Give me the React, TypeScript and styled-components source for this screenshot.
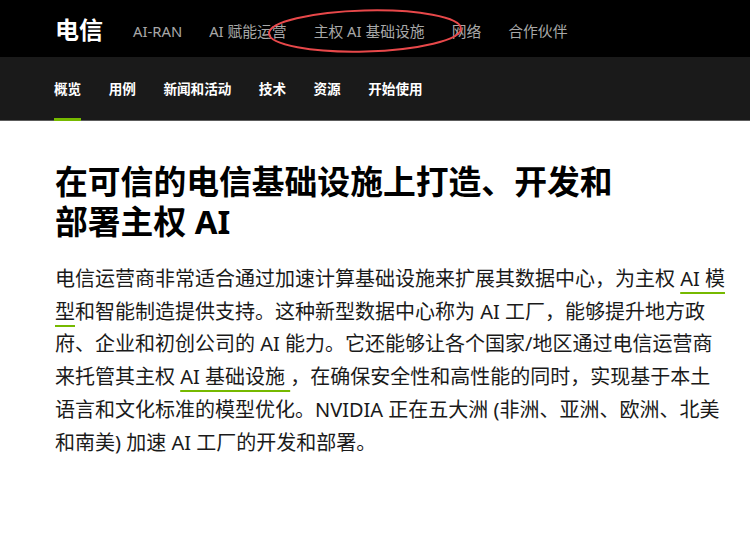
import React from "react";
import styled, { createGlobalStyle } from "styled-components";

const GlobalStyle = createGlobalStyle`
  html, body { margin: 0; padding: 0; background: #fff; }
  body { font-family: "Noto Sans", "Noto Sans CJK SC", sans-serif; }
  * { box-sizing: border-box; }
`;

const Page = styled.div`
  position: relative;
  width: 750px;
  min-height: 538px;
  background: #fff;
`;

const TopBar = styled.header`
  position: relative;
  height: 57px;
  background: #000;
  display: flex;
  align-items: center;
  padding-left: 55px;
`;

const Logo = styled.div`
  color: #fff;
  font-size: 24px;
  font-weight: 700;
  line-height: 1;
  margin-right: 30px;
  font-family: "Noto Sans CJK SC", sans-serif;
`;

const TopNav = styled.nav`
  display: flex;
  gap: 27px;
  padding-top: 5px;
`;

const TopLink = styled.span`
  color: #a8a8a8;
  font-size: 14.8px;
  line-height: 1;
  white-space: nowrap;
`;

const Annotation = styled.svg`
  position: absolute;
  left: 265px;
  top: 7px;
  width: 200px;
  height: 48px;
  pointer-events: none;
`;

const SubBar = styled.nav`
  height: 64px;
  background: #1a1a1a;
  border-bottom: 1px solid #5c5c5c;
  display: flex;
  align-items: stretch;
  padding-left: 54px;
  gap: 27.5px;
`;

const SubLink = styled.span<{ $active?: boolean }>`
  display: flex;
  align-items: center;
  color: #fff;
  font-size: 13.6px;
  font-weight: 700;
  white-space: nowrap;
  border-bottom: 3px solid ${(p) => (p.$active ? "#76b900" : "transparent")};
  margin-bottom: -1px;
  font-family: "Noto Sans CJK SC", sans-serif;
`;

const Main = styled.main`
  padding: 41px 28px 40px 55px;
`;

const Title = styled.h1`
  margin: 0 0 22px;
  font-size: 32.8px;
  line-height: 39.5px;
  font-weight: 700;
  color: #000;
  width: 590px;
  font-family: "Noto Sans", "Noto Sans CJK SC", sans-serif;
`;

const Body = styled.p`
  margin: 0;
  font-size: 20px;
  line-height: 32.7px;
  color: #1a1a1a;
  width: 670px;
`;

const Link = styled.a`
  color: #1a1a1a;
  text-decoration: underline;
  text-decoration-color: #76b900;
  text-decoration-thickness: 2px;
  text-underline-offset: 6px;
`;

export default function App() {
  const top = ["AI-RAN", "AI 赋能运营", "主权 AI 基础设施", "网络", "合作伙伴"];
  const sub = ["概览", "用例", "新闻和活动", "技术", "资源", "开始使用"];
  return (
    <Page>
      <GlobalStyle />
      <TopBar>
        <Logo>电信</Logo>
        <TopNav>
          {top.map((t) => (
            <TopLink key={t}>{t}</TopLink>
          ))}
        </TopNav>
        <Annotation viewBox="0 0 200 48">
          <ellipse
            cx="100"
            cy="24"
            rx="96"
            ry="20.5"
            fill="none"
            stroke="#e8484a"
            strokeWidth="2"
            transform="rotate(-1.5 100 24)"
          />
        </Annotation>
      </TopBar>
      <SubBar>
        {sub.map((s, i) => (
          <SubLink key={s} $active={i === 0}>
            {s}
          </SubLink>
        ))}
      </SubBar>
      <Main>
        <Title>在可信的电信基础设施上打造、开发和部署主权 AI</Title>
        <Body>
          电信运营商非常适合通过加速计算基础设施来扩展其数据中心，为主权 <Link>AI 模型</Link>和智能制造提供支持。这种新型数据中心称为 AI 工厂，能够提升地方政府、企业和初创公司的 AI 能力。它还能够让各个国家/地区通过电信运营商来托管其主权 <Link>AI 基础设施 </Link>，在确保安全性和高性能的同时，实现基于本土语言和文化标准的模型优化。NVIDIA 正在五大洲 (非洲、亚洲、欧洲、北美和南美) 加速 AI 工厂的开发和部署。
        </Body>
      </Main>
    </Page>
  );
}
